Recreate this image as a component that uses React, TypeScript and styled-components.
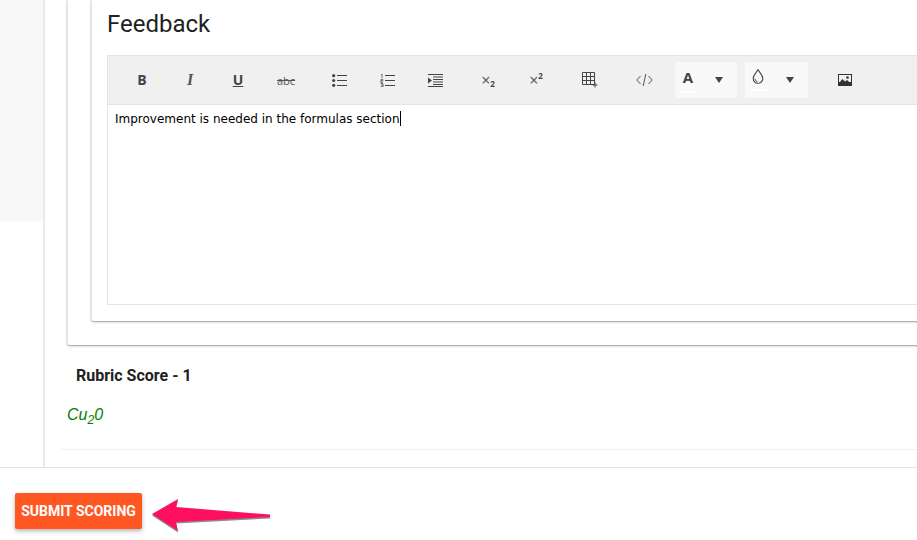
import React from 'react';
import styled, { createGlobalStyle } from 'styled-components';

const GlobalStyle = createGlobalStyle`
  html, body {
    margin: 0;
    padding: 0;
    height: 540px;
    overflow: hidden;
    background: #fff;
    font-family: Roboto, "Liberation Sans", sans-serif;
  }
`;

const Page = styled.div`
  position: relative;
  display: flex;
  flex-direction: column;
  width: 917px;
  height: 540px;
  overflow: hidden;
`;

const MainRow = styled.div`
  display: flex;
  height: 467px;
  flex: none;
  border-bottom: 1px solid #e2e2e2;
`;

const SideRail = styled.aside`
  width: 43px;
  flex: none;
`;

const RailBlock = styled.div`
  height: 221px;
  background: #f8f8f8;
`;

const Content = styled.main`
  flex: 1;
  min-width: 0;
  border-left: 2px solid #eaeaea;
  padding-left: 22px;
  overflow: hidden;
`;

const OuterCard = styled.section`
  width: 1000px;
  height: 345px;
  box-sizing: border-box;
  padding-left: 23px;
  border-left: 1px solid #e6e6e6;
  border-radius: 0 0 0 3px;
  box-shadow: 0 1px 2px rgba(0, 0, 0, 0.4);
`;

const InnerCard = styled.div`
  height: 321px;
  box-sizing: border-box;
  padding-left: 15px;
  border-left: 1px solid #e6e6e6;
  border-radius: 0 0 0 3px;
  box-shadow: 0 1px 2px rgba(0, 0, 0, 0.4);
`;

const Heading = styled.h2`
  margin: 0;
  height: 55px;
  box-sizing: border-box;
  padding-top: 10px;
  font-size: 24px;
  line-height: 28px;
  font-weight: 400;
  color: #212121;
`;

const Editor = styled.div`
  height: 250px;
  box-sizing: border-box;
  border: 1px solid #e4e4e4;
  border-right: none;
`;

const Toolbar = styled.div`
  display: flex;
  align-items: center;
  height: 49px;
  box-sizing: border-box;
  padding-left: 10px;
  background: #f0f0f0;
  border-bottom: 1px solid #e4e4e4;
`;

const ToolButton = styled.span<{ $gap?: number }>`
  display: flex;
  align-items: center;
  justify-content: center;
  width: 48px;
  height: 36px;
  flex: none;
  margin-left: ${(p) => p.$gap ?? 0}px;
  color: #444;
  font-family: "Open Sans", "Liberation Sans", sans-serif;
`;

const BoldGlyph = styled.b`
  font-size: 14px;
  font-weight: 700;
  margin-top: -2px;
`;

const ItalicGlyph = styled.i`
  font-family: "Liberation Serif", serif;
  font-size: 16px;
  font-weight: 700;
  color: #555;
`;

const UnderGlyph = styled.u`
  font-size: 14px;
  font-weight: 700;
  margin-top: -2px;
`;

const StrikeGlyph = styled.s`
  font-size: 11px;
  color: #555;
`;

const ScriptGlyph = styled.span`
  display: flex;
  align-items: flex-start;
  font-size: 16px;
  line-height: 14px;
  color: #555;
`;

const ScriptDigit = styled.small<{ $low?: boolean }>`
  font-size: 8px;
  font-weight: 700;
  line-height: 8px;
  color: #444;
  margin-top: ${(p) => (p.$low ? 7 : -1)}px;
`;

const ColorPicker = styled.span<{ $width: number; $gap: number }>`
  display: flex;
  align-items: center;
  width: ${(p) => p.$width}px;
  height: 36px;
  flex: none;
  margin-left: ${(p) => p.$gap}px;
  background: #f9f9f9;
  color: #444;
`;

const Swatch = styled.span`
  display: flex;
  flex-direction: column;
  align-items: center;
  width: 16px;
  margin-left: 5px;
  font-family: "Open Sans", "Liberation Sans", sans-serif;
  font-size: 15px;
  font-weight: 700;
  line-height: 18px;
`;

const SwatchBar = styled.span`
  display: block;
  width: 16px;
  height: 2px;
  margin-top: 5px;
  background: #fff;
`;

const Caret = styled.span<{ $left: number }>`
  width: 0;
  height: 0;
  margin-left: ${(p) => p.$left}px;
  border-left: 4px solid transparent;
  border-right: 4px solid transparent;
  border-top: 6px solid #444;
`;

const EditorBody = styled.div`
  padding: 6px 7px;
  font-family: "DejaVu Sans", Verdana, sans-serif;
  font-size: 12px;
  line-height: 16px;
  color: #000;
`;

const CaretLine = styled.span`
  display: inline-block;
  width: 1px;
  height: 15px;
  background: #000;
  vertical-align: -3px;
`;

const RubricBlock = styled.div`
  margin-left: -7px;
  height: 104px;
  border-bottom: 1px solid #f0f0f0;
  border-radius: 0 0 0 6px;
`;

const RubricTitle = styled.h4`
  margin: 0;
  padding: 21px 0 0 16px;
  font-size: 16px;
  line-height: 19px;
  font-weight: 700;
  color: #212121;
`;

const Formula = styled.div`
  margin: 20px 0 0 7px;
  font-family: "Liberation Sans", Arial, sans-serif;
  font-style: italic;
  font-size: 16px;
  line-height: 19px;
  color: #008000;
`;

const FormulaSub = styled.sub`
  font-size: 12px;
  line-height: 0;
`;

const Footer = styled.footer`
  display: flex;
  align-items: flex-start;
  padding: 25px 0 0 15px;
`;

const SubmitButton = styled.button`
  width: 127px;
  height: 36px;
  padding: 0;
  border: none;
  border-radius: 2px;
  background: #ff5722;
  color: #fff;
  font-family: Roboto, sans-serif;
  font-size: 14px;
  font-weight: 700;
  text-transform: uppercase;
  box-shadow: 0 2px 4px rgba(0, 0, 0, 0.3);
`;

const Arrow = styled.svg`
  position: absolute;
  left: 148px;
  top: 494px;
`;

const stroke = { stroke: '#444', fill: 'none' };

const BulletsIcon = () => (
  <svg width="15" height="13" viewBox="0 0 15 13">
    <circle cx="1.7" cy="1.7" r="1.6" fill="#444" />
    <circle cx="1.7" cy="6.5" r="1.6" fill="#444" />
    <circle cx="1.7" cy="11.3" r="1.6" fill="#444" />
    <path d="M5 1.5h10M5 6.5h10M5 11.5h10" {...stroke} />
  </svg>
);

const NumbersIcon = () => (
  <svg width="15" height="13" viewBox="0 0 15 13">
    <path d="M1 .8l1-.6v3.6M.6 5.3h2.2v1.4H.8v1.5h2.2M.6 9.6H3v3.2H.6M1.2 11.2H3" stroke="#444" strokeWidth="0.8" fill="none" />
    <path d="M5 1.5h10M5 6.5h10M5 11.5h10" {...stroke} />
  </svg>
);

const IndentIcon = () => (
  <svg width="15" height="13" viewBox="0 0 15 13">
    <path d="M0 .5h15M5 3h10M5 5.5h10M5 8h10M5 10.5h10M0 12.5h15" {...stroke} />
    <path d="M0 3.5l4 3-4 3z" fill="#444" />
  </svg>
);

const TableIcon = () => (
  <svg width="16" height="16" viewBox="0 0 16 16">
    <path d="M.5.5h12v12H.5zM4.5.5v12M8.5.5v12M.5 4.5h12M.5 8.5h12" stroke="#444" fill="none" />
    <path d="M13 10.5v5M10.5 13h5" stroke="#444" fill="none" />
  </svg>
);

const CodeIcon = () => (
  <svg width="17" height="14" viewBox="0 0 17 14">
    <path d="M4.5 3L.8 7l3.7 4M12.5 3l3.7 4-3.7 4M9.8 1L7.2 13" stroke="#555" fill="none" />
  </svg>
);

const DropIcon = () => (
  <svg width="12" height="15" viewBox="0 0 12 15">
    <path d="M6 .8C4.5 3.5 1.2 6 1.2 9.5a4.8 4.8 0 0 0 9.6 0C10.800 6 7.500 3.500 6 .8z" stroke="#444" strokeWidth="1.1" fill="none" />
    <path d="M3 9.800c.2 1.600 1 2.500 2.400 2.800" stroke="#444" fill="none" />
  </svg>
);

const ImageIcon = () => (
  <svg width="14" height="12" viewBox="0 0 14 12">
    <rect width="14" height="12" fill="#333" />
    <rect x="1" y="1" width="12" height="7" fill="#f0f0f0" />
    <path d="M1 9l3.500-4 2.500 2.500 2-1.500 4 3.500v1.500H1z" fill="#333" />
    <circle cx="9.500" cy="3.500" r="1.300" fill="#333" />
  </svg>
);

export default function App() {
  return (
    <Page>
      <GlobalStyle />
      <MainRow>
        <SideRail>
          <RailBlock />
        </SideRail>
        <Content>
          <OuterCard>
            <InnerCard>
              <Heading>Feedback</Heading>
              <Editor>
                <Toolbar>
                  <ToolButton><BoldGlyph>B</BoldGlyph></ToolButton>
                  <ToolButton><ItalicGlyph>I</ItalicGlyph></ToolButton>
                  <ToolButton><UnderGlyph>U</UnderGlyph></ToolButton>
                  <ToolButton><StrikeGlyph>abc</StrikeGlyph></ToolButton>
                  <ToolButton $gap={5}><BulletsIcon /></ToolButton>
                  <ToolButton><NumbersIcon /></ToolButton>
                  <ToolButton><IndentIcon /></ToolButton>
                  <ToolButton $gap={5}>
                    <ScriptGlyph>×<ScriptDigit $low>2</ScriptDigit></ScriptGlyph>
                  </ToolButton>
                  <ToolButton>
                    <ScriptGlyph>×<ScriptDigit>2</ScriptDigit></ScriptGlyph>
                  </ToolButton>
                  <ToolButton $gap={6}><TableIcon /></ToolButton>
                  <ToolButton $gap={6}><CodeIcon /></ToolButton>
                  <ColorPicker $width={62} $gap={7}>
                    <Swatch>A<SwatchBar /></Swatch>
                    <Caret $left={19} />
                  </ColorPicker>
                  <ColorPicker $width={63} $gap={8}>
                    <Swatch><DropIcon /><SwatchBar /></Swatch>
                    <Caret $left={20} />
                  </ColorPicker>
                  <ToolButton $gap={13}><ImageIcon /></ToolButton>
                </Toolbar>
                <EditorBody>
                  Improvement is needed in the formulas section<CaretLine />
                </EditorBody>
              </Editor>
            </InnerCard>
          </OuterCard>
          <RubricBlock>
            <RubricTitle>Rubric Score - 1</RubricTitle>
            <Formula>Cu<FormulaSub>2</FormulaSub>0</Formula>
          </RubricBlock>
        </Content>
      </MainRow>
      <Footer>
        <SubmitButton>Submit Scoring</SubmitButton>
      </Footer>
      <Arrow width="126" height="42" viewBox="0 0 126 42">
        <path d="M4 20L30 5l-2 8 94 7.500v2.500L28 28l2 9z" fill="#000" opacity="0.45" transform="translate(0 1.500)" />
        <path d="M4 20L30 5l-2 8 94 7.500v2.500L28 28l2 9z" fill="#ff0f5f" />
      </Arrow>
    </Page>
  );
}
